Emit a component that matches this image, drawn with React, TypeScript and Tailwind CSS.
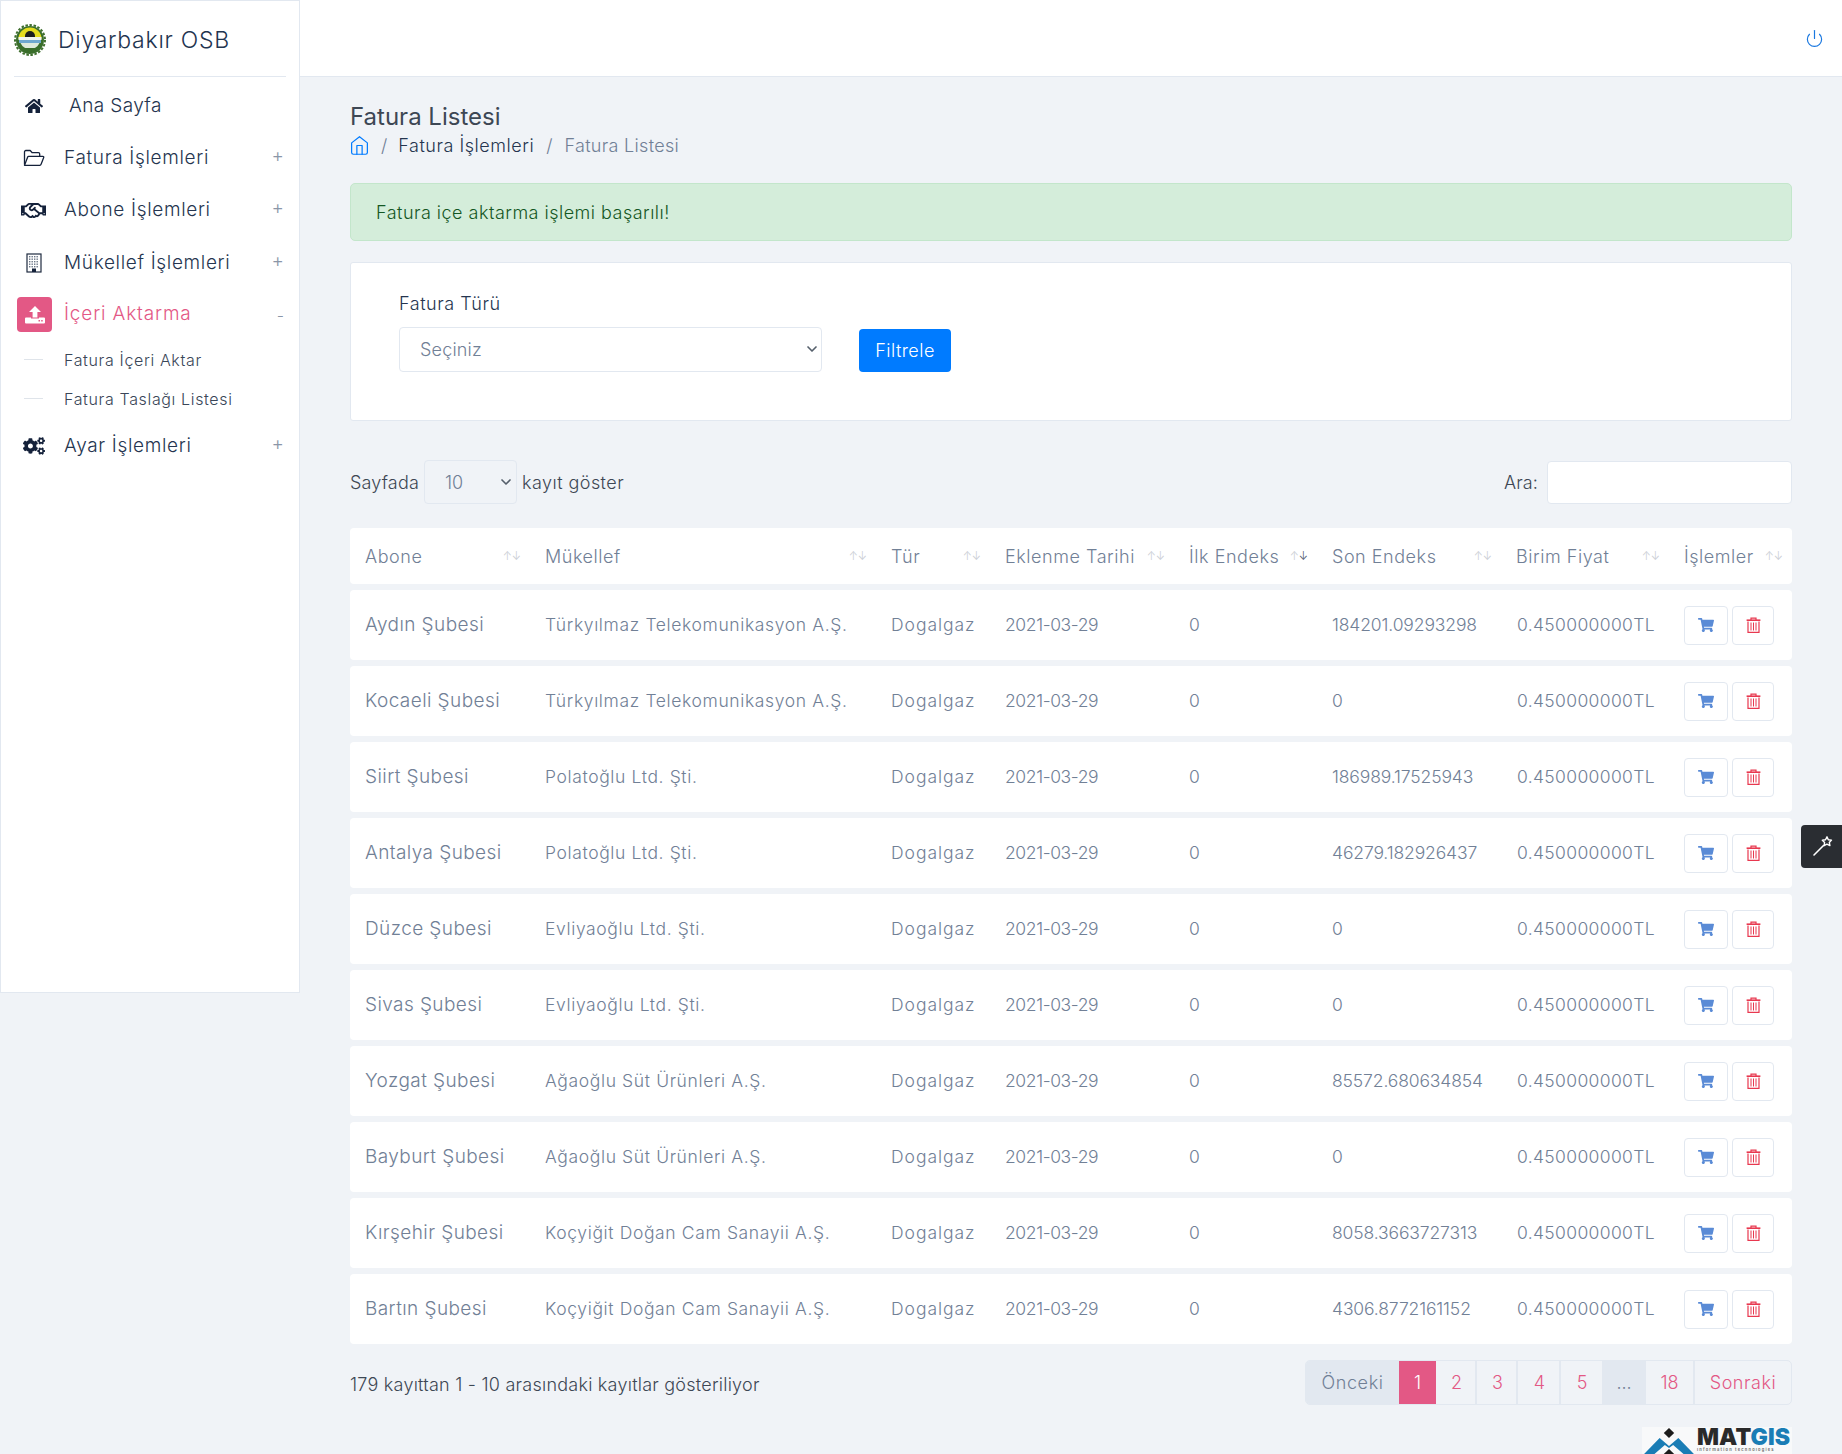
import React from "react";
import { FaHome, FaRegHandshake, FaCogs, FaShoppingCart } from "react-icons/fa";
import { FiHome, FiPower, FiChevronDown } from "react-icons/fi";

const rows: [string, string, string][] = [
  ["Aydın Şubesi", "Türkyılmaz Telekomunikasyon A.Ş.", "184201.09293298"],
  ["Kocaeli Şubesi", "Türkyılmaz Telekomunikasyon A.Ş.", "0"],
  ["Siirt Şubesi", "Polatoğlu Ltd. Şti.", "186989.17525943"],
  ["Antalya Şubesi", "Polatoğlu Ltd. Şti.", "46279.182926437"],
  ["Düzce Şubesi", "Evliyaoğlu Ltd. Şti.", "0"],
  ["Sivas Şubesi", "Evliyaoğlu Ltd. Şti.", "0"],
  ["Yozgat Şubesi", "Ağaoğlu Süt Ürünleri A.Ş.", "85572.680634854"],
  ["Bayburt Şubesi", "Ağaoğlu Süt Ürünleri A.Ş.", "0"],
  ["Kırşehir Şubesi", "Koçyiğit Doğan Cam Sanayii A.Ş.", "8058.3663727313"],
  ["Bartın Şubesi", "Koçyiğit Doğan Cam Sanayii A.Ş.", "4306.8772161152"],
];

const cols = "grid grid-cols-[180px_346px_114px_184px_143px_184px_168px_123px] items-center";

const heads: string[] = ["Abone", "Mükellef", "Tür", "Eklenme Tarihi", "İlk Endeks", "Son Endeks", "Birim Fiyat", "İşlemler"];

function Logo() {
  return (
    <svg width="32" height="32" viewBox="0 0 32 32" className="shrink-0">
      <circle cx="16" cy="16" r="15" fill="none" stroke="#3f6f2e" strokeWidth="2" strokeDasharray="2.5 1.6" />
      <circle cx="16" cy="16" r="14" fill="#3a6e2b" />
      <path d="M4.5 15a11.5 11.5 0 0 1 23 0z" fill="#e6dc1e" />
      <path d="M11 12a5 5 0 0 1 10 0v1H11z" fill="#1d1d1d" />
      <rect x="4.5" y="13" width="23" height="3" fill="#f2f4ee" />
      <rect x="5" y="16" width="22" height="3" fill="#6fa8cf" />
      <path d="M6.5 19h19a10.5 10.5 0 0 1-19 0z" fill="#dfeadb" />
      <path d="M10 24h12l-2 2.5h-8z" fill="#3a6e2b" />
    </svg>
  );
}

function FolderIcon() {
  return (
    <svg width="22" height="18" viewBox="0 0 22 18" fill="none" stroke="#14213a" strokeWidth="1.3" strokeLinejoin="round">
      <path d="M1.5 15.5V2.8A1.3 1.3 0 0 1 2.8 1.5h4.4l2 2.2h6.2a1.3 1.3 0 0 1 1.3 1.3v2" />
      <path d="M1.5 16.3l3.2-8.2a1 1 0 0 1 1-.7h14.2a.8.8 0 0 1 .8 1.1l-2.6 6.7a1.5 1.5 0 0 1-1.4 1.1z" />
    </svg>
  );
}

function BuildingIcon() {
  const dots: React.ReactNode[] = [];
  for (let r = 0; r < 5; r++) {
    for (let c = 0; c < 4; c++) {
      dots.push(<rect key={`${r}-${c}`} x={3 + c * 2.5} y={3 + r * 2.5} width="1.4" height="1.4" fill="#6b7686" />);
    }
  }
  return (
    <svg width="16" height="20" viewBox="0 0 16 20">
      <rect x="1" y="1" width="14" height="18" fill="#fff" stroke="#1f2b40" strokeWidth="1.2" />
      {dots}
      <rect x="6" y="15.5" width="4" height="3.5" fill="#14213a" />
    </svg>
  );
}

function UploadIcon() {
  return (
    <svg width="20" height="20" viewBox="0 0 20 20">
      <path d="M10 1l6 6h-3.6v5.5H7.6V7H4z" fill="#fff" />
      <path d="M1 12.5h5v1h8v-1h5a1 1 0 0 1 1 1v4a1 1 0 0 1-1 1H1a1 1 0 0 1-1-1v-4a1 1 0 0 1 1-1z" fill="#fff" />
      <rect x="13.5" y="15" width="1.5" height="1.5" fill="#e35885" />
      <rect x="16.2" y="15" width="1.5" height="1.5" fill="#e35885" />
    </svg>
  );
}

function TrashIcon() {
  return (
    <svg width="15" height="16" viewBox="0 0 15 16" fill="none" stroke="#e8384f" strokeWidth="1.2">
      <path d="M5 3V1.2h5V3" />
      <path d="M.6 3.2h13.8" strokeWidth="1.6" />
      <path d="M2 4.5v10.9h11V4.5" />
      <path d="M5 5.5v8M7.5 5.5v8M10 5.5v8" strokeWidth="1" />
    </svg>
  );
}

function WandIcon() {
  return (
    <svg width="24" height="24" viewBox="0 0 24 24" fill="none" stroke="#fff" strokeLinejoin="round" strokeLinecap="round">
      <path d="M4 20l9.5-9.5" strokeWidth="1.6" />
      <path d="M17 1.8l1.3 2.9 3.2.4-2.2 2.3.6 3.2-3-1.5-2.8 1.6.5-3.2-2.3-2.2 3.2-.5z" strokeWidth="1.4" />
    </svg>
  );
}

function NavItem({ icon, label, sign, extra }: { icon: React.ReactNode; label: string; sign?: string; extra?: string }) {
  return (
    <div className={`flex h-[52px] items-center ${extra ?? ""}`}>
      <div className="flex w-[63px] justify-center pl-[2px] text-[#14213a]">{icon}</div>
      <span className="text-[19px] font-light tracking-[0.035em] text-[#25354f]">{label}</span>
      {sign && <span className="mr-[15px] ml-auto -translate-y-[2px] text-[19px] font-light text-[#8a96a8]">{sign}</span>}
    </div>
  );
}

function SubItem({ label }: { label: string }) {
  return (
    <div className="flex h-[39px] items-center">
      <div className="mr-[21px] ml-[23px] h-px w-[19px] bg-[#dfe4ea]" />
      <span className="text-[16px] font-light tracking-[0.04em] text-[#3a4658]">{label}</span>
    </div>
  );
}

function SortArrows({ dark }: { dark?: boolean }) {
  return (
    <span className="flex items-center text-[11px] leading-none text-[#c8ccd2]">
      <span>↑</span>
      <span className={dark ? "text-[#4a5568]" : ""}>↓</span>
    </span>
  );
}

export default function App() {
  return (
    <div className="relative flex h-[1454px] overflow-hidden bg-[#f0f3f7] font-['Inter',sans-serif]">
      <aside className="h-[993px] w-[300px] shrink-0 border border-[#e2e8f0] bg-white">
        <div className="mx-[13px] flex h-[76px] items-center gap-[12px] border-b border-[#e2e8f0] pt-[3px]">
          <Logo />
          <span className="text-[23px] font-light tracking-[0.032em] text-[#1f3550]">Diyarbakır OSB</span>
        </div>
        <div className="pt-[3px]">
          <div className="flex h-[52px] items-center">
            <div className="flex w-[68px] justify-center pr-[3px] text-[#14213a]"><FaHome size={18} /></div>
            <span className="text-[19px] font-light tracking-[0.02em] text-[#25354f]">Ana Sayfa</span>
          </div>
          <NavItem icon={<FolderIcon />} label="Fatura İşlemleri" sign="+" />
          <NavItem icon={<FaRegHandshake size={25} />} label="Abone İşlemleri" sign="+" />
          <NavItem icon={<BuildingIcon />} label="Mükellef İşlemleri" sign="+" extra="mt-[1px]" />
          <div className="flex h-[51px] items-center">
            <div className="mr-[12px] ml-[16px] flex h-[35px] w-[35px] items-center justify-center rounded-[4px] bg-[#e35885]"><UploadIcon /></div>
            <span className="text-[19px] font-light tracking-[0.045em] text-[#e35885]">İçeri Aktarma</span>
            <span className="mr-[15px] ml-auto text-[16px] font-light text-[#8a96a8]">-</span>
          </div>
          <SubItem label="Fatura İçeri Aktar" />
          <SubItem label="Fatura Taslağı Listesi" />
          <NavItem icon={<FaCogs size={22} />} label="Ayar İşlemleri" sign="+" extra="mt-[2px]" />
        </div>
      </aside>

      <div className="min-w-0 flex-1">
        <header className="flex h-[77px] items-center justify-end border-b border-[#e2e8f0] bg-white pr-[18px] text-[#1a78e0]">
          <FiPower size={19} strokeWidth={1.5} />
        </header>

        <main className="px-[50px]">
          <h1 className="mt-[25px] text-[24px] leading-[30px] font-normal text-[#3d4754]">Fatura Listesi</h1>
          <div className="flex h-[27px] items-center text-[18px] font-light">
            <FiHome size={21} strokeWidth={1.4} className="-ml-[1px] text-[#007bff]" />
            <span className="mx-[11px] text-[#718096]">/</span>
            <span className="tracking-[0.03em] text-[#25354f]">Fatura İşlemleri</span>
            <span className="mx-[12px] text-[#718096]">/</span>
            <span className="tracking-[0.017em] text-[#718096]">Fatura Listesi</span>
          </div>

          <div className="mt-[24px] flex h-[58px] items-center rounded-[5px] border border-[#c3e6cb] bg-[#d4edda] pl-[25px] text-[18px] font-light tracking-[0.027em] text-[#155724]">
            Fatura içe aktarma işlemi başarılı!
          </div>

          <section className="mt-[21px] h-[159px] rounded-[3px] border border-[#e2e8f0] bg-white pl-[48px]">
            <label className="mt-[29px] block text-[18px] leading-[24px] font-light tracking-[0.03em] text-[#25354f]">Fatura Türü</label>
            <div className="mt-[11px] flex items-end gap-[37px]">
              <div className="relative">
                <select className="block h-[45px] w-[423px] appearance-none rounded-[4px] border border-[#e2e8f0] bg-white pr-[2px] pl-[20px] text-[18px] font-light tracking-[0.01em] text-[#718096]">
                  <option>Seçiniz</option>
                </select>
                <FiChevronDown size={16} strokeWidth={2.5} className="pointer-events-none absolute top-[14px] right-[2px] text-[#555f6b]" />
              </div>
              <button className="h-[43px] w-[92px] rounded-[4px] bg-[#007bff] text-[18px] font-light tracking-[0.025em] text-white">Filtrele</button>
            </div>
          </section>

          <div className="mt-[39px] flex h-[44px] items-center text-[18px] font-light text-[#3d4754]">
            <span className="tracking-[0.01em]">Sayfada</span>
            <div className="relative mx-[5px]">
              <select className="block h-[44px] w-[93px] appearance-none rounded-[4px] border border-[#e2e8f0] bg-[#f0f3f7] pl-[20px] text-[18px] font-light text-[#718096]">
                <option>10</option>
              </select>
              <FiChevronDown size={16} strokeWidth={2.5} className="pointer-events-none absolute top-[14px] right-[3px] text-[#555f6b]" />
            </div>
            <span className="tracking-[0.025em]">kayıt göster</span>
            <label className="mr-[9px] ml-auto tracking-[0.005em]">Ara:</label>
            <input className="h-[43px] w-[245px] rounded-[4px] border border-[#e2e8f0] bg-white" aria-label="Ara" />
          </div>

          <div className="mt-[24px]">
            <div className={`${cols} h-[56px] rounded-[4px] bg-white text-[18px] font-light text-[#718096]`}>
              {heads.map((h, i) => (
                <div key={h} className="flex items-center justify-between pr-[9px] pl-[15px]">
                  <span className="tracking-[0.03em]">{h}</span>
                  <SortArrows dark={i === 4} />
                </div>
              ))}
            </div>
            {rows.map(([a, m, son]) => (
              <div key={a} className={`${cols} mt-[6px] h-[70px] rounded-[4px] bg-white text-[17.5px] font-light text-[#718096]`}>
                <div className="pl-[15px] text-[19px] tracking-[0.022em]">{a}</div>
                <div className="pl-[15px] tracking-[0.036em]">{m}</div>
                <div className="pl-[15px] tracking-[0.055em]">Dogalgaz</div>
                <div className="pl-[15px] tracking-[-0.022em]">2021-03-29</div>
                <div className="pl-[15px]">0</div>
                <div className="pl-[15px] tracking-[-0.007em] whitespace-nowrap">{son}</div>
                <div className="pl-[16px] tracking-[0.02em] whitespace-nowrap">0.450000000TL</div>
                <div className="flex gap-[4px] pl-[15px]">
                  <button className="flex h-[39px] w-[44px] items-center justify-center rounded-[4px] border border-[#e2e8f0] bg-white text-[#5a8bd6]"><FaShoppingCart size={16} /></button>
                  <button className="flex h-[39px] w-[42px] items-center justify-center rounded-[4px] border border-[#e2e8f0] bg-white"><TrashIcon /></button>
                </div>
              </div>
            ))}
          </div>

          <div className="mt-[16px] flex items-center justify-between">
            <span className="pt-[4px] text-[18px] font-light tracking-[0.013em] text-[#3d4754]">179 kayıttan 1 - 10 arasındaki kayıtlar gösteriliyor</span>
            <nav className="flex h-[45px] items-stretch overflow-hidden rounded-[5px] border border-[#e2e8f0] text-[18px] font-light text-[#e35885]">
              <span className="flex w-[93px] items-center justify-center bg-[#e2e8f0] tracking-[0.035em] text-[#718096]">Önceki</span>
              <span className="flex w-[37px] items-center justify-center bg-[#e35885] text-white">1</span>
              <span className="flex w-[41px] items-center justify-center border-r-2 border-[#e2e8f0] pl-[2px]">2</span>
              <span className="flex w-[41px] items-center justify-center border-r-2 border-[#e2e8f0] pl-[2px]">3</span>
              <span className="flex w-[43px] items-center justify-center border-r-2 border-[#e2e8f0] pl-[2px]">4</span>
              <span className="flex w-[41px] items-center justify-center pl-[1px]">5</span>
              <span className="flex w-[44px] items-center justify-center bg-[#e2e8f0] text-[#718096]">...</span>
              <span className="flex w-[49px] items-center justify-center border-r-2 border-[#e2e8f0]">18</span>
              <span className="flex w-[96px] items-center justify-center tracking-[0.03em]">Sonraki</span>
            </nav>
          </div>

          <div className="mt-[22px] flex justify-end">
            <div className="flex h-[27px] w-[150px] items-start bg-[#f8f9fa]">
              <svg width="54" height="27" viewBox="0 0 52 27" preserveAspectRatio="none" className="shrink-0">
                <path d="M2 27L17 11l9 8 9-8 15 16H40L30 18l-4 3-4-3L12 27z" fill="#1a7db5" />
                <path d="M26 1l5 5-5 5-5-5z" fill="#1c1c1c" />
                <path d="M26 22l5 5H21z" fill="#1c1c1c" />
              </svg>
              <div className="ml-[1px] flex w-[95px] flex-col pt-[1px]">
                <span className="text-[23px] leading-[19px] font-black tracking-[0.005em] text-[#2a2a2a]">
                  MAT<span className="text-[#1a7db5]">GIS</span>
                </span>
                <span className="text-[4px] leading-[5px] font-bold tracking-[0.3em] whitespace-nowrap text-[#777]">Information technologies</span>
              </div>
            </div>
          </div>
        </main>
      </div>

      <div className="absolute top-[825px] right-0 flex h-[43px] w-[41px] items-center justify-center rounded-l-[4px] bg-[#2a2d32]">
        <WandIcon />
      </div>
    </div>
  );
}
